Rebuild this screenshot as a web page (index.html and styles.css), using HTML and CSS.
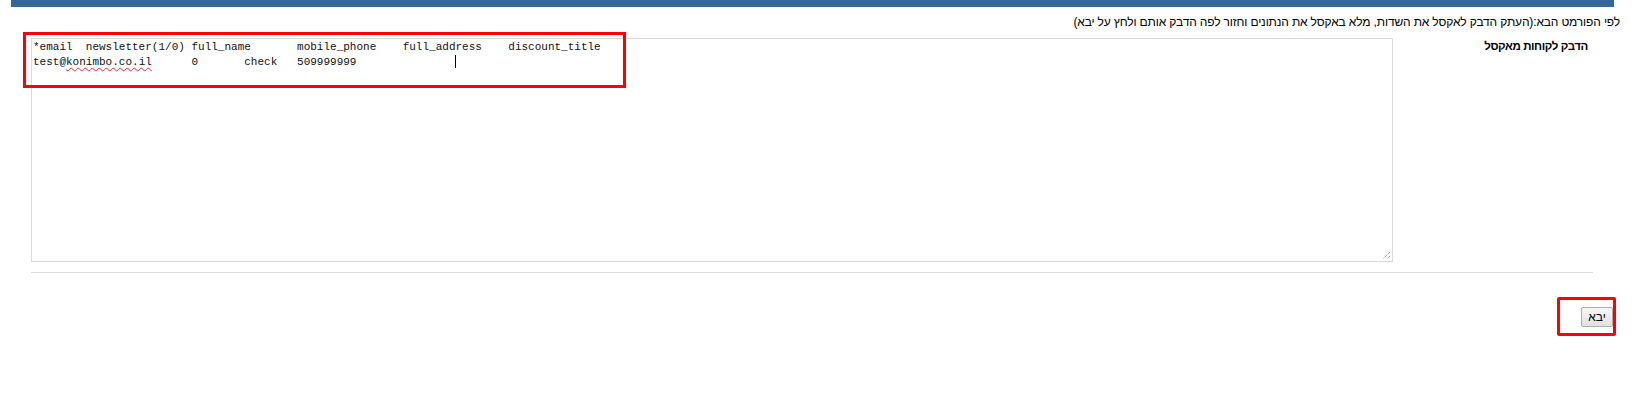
FILE: index.html
```html
<!DOCTYPE html>
<html lang="he" dir="rtl">
<head>
    <meta charset="UTF-8">
    <title>יבוא לקוחות</title>
    <link rel="stylesheet" href="styles.css">
</head>
<body>
    <div class="topbar"></div>
    <p class="intro">לפי הפורמט הבא:(העתק הדבק לאקסל את השדות, מלא באקסל את הנתונים וחזור לפה הדבק אותם ולחץ על יבא)</p>
    <div class="form-row">
        <div class="form-label">הדבק לקוחות מאקסל</div>
        <div class="paste-box">
<pre class="paste-text">*email	newsletter(1/0)	full_name	mobile_phone	full_address	discount_title
test@<span class="misspelled">konimbo.co.il</span>	0	check	509999999		<span class="caret"></span></pre>
            <svg class="grip" width="9" height="9" viewBox="0 0 9 9">
                <path d="M8 1 L1 8 M8 5 L5 8" stroke="#777" stroke-width="1" stroke-dasharray="1 1" fill="none"/>
            </svg>
        </div>
    </div>
    <div class="divider"></div>
    <div class="actions">
        <button class="submit-btn">יבא</button>
    </div>

    <!-- annotation boxes drawn over the screenshot -->
    <div class="mark mark-text"></div>
    <div class="mark mark-btn"></div>
</body>
</html>
```

FILE: styles.css
```css
body {
    margin: 0;
    padding: 0;
    direction: rtl;
    font-family: "Liberation Sans", Arial, sans-serif;
    font-size: 12px;
    color: #000;
    background-color: #fff;
}
.topbar {
    height: 7px;
    margin-left: 11px;
    margin-right: 20px;
    background-color: #336699;
}
.intro {
    margin: 8px 14px 0 0;
    line-height: 14px;
    letter-spacing: -0.15px;
}
.form-row {
    display: flex;
    margin-top: 9px;
}
.form-label {
    width: 195px;
    padding-right: 46px;
    padding-top: 1px;
    line-height: 14px;
    font-size: 11.5px;
    font-weight: bold;
    letter-spacing: -0.4px;
}
.paste-box {
    position: relative;
    width: 1360px;
    height: 222px;
    border: 1px solid #d9d9d9;
    direction: ltr;
}
.paste-text {
    margin: 0;
    padding: 1px 1px 0;
    font-family: "Liberation Mono", "Courier New", monospace;
    font-size: 11px;
    line-height: 15px;
    tab-size: 8;
    white-space: pre;
    color: #111;
}
.misspelled {
    text-decoration: underline wavy #e03030;
    text-decoration-thickness: 1px;
    text-decoration-skip-ink: none;
    text-underline-offset: 2px;
}
.caret {
    display: inline-block;
    width: 1px;
    height: 13px;
    vertical-align: -3px;
    background-color: #000;
}
.grip {
    position: absolute;
    right: 1px;
    bottom: 1px;
}
.divider {
    height: 1px;
    margin: 10px 41px 0 31px;
    background-color: #dcdcdc;
}
.actions {
    display: flex;
    padding-right: 21px;
    margin-top: 34px;
}
.submit-btn {
    width: 32px;
    height: 20px;
    padding: 0;
    font-family: "Liberation Sans", Arial, sans-serif;
    font-size: 12px;
    border: 1px solid #adadad;
    border-radius: 2px;
    background: linear-gradient(#f7f7f7, #e1e1e1);
    color: #000;
}
.mark {
    position: absolute;
    border: 3px solid #ff0000;
    box-sizing: border-box;
}
.mark-text {
    left: 23px;
    top: 32px;
    width: 603px;
    height: 56px;
}
.mark-btn {
    left: 1557px;
    top: 297px;
    width: 59px;
    height: 39px;
    border-radius: 2px;
}
```
